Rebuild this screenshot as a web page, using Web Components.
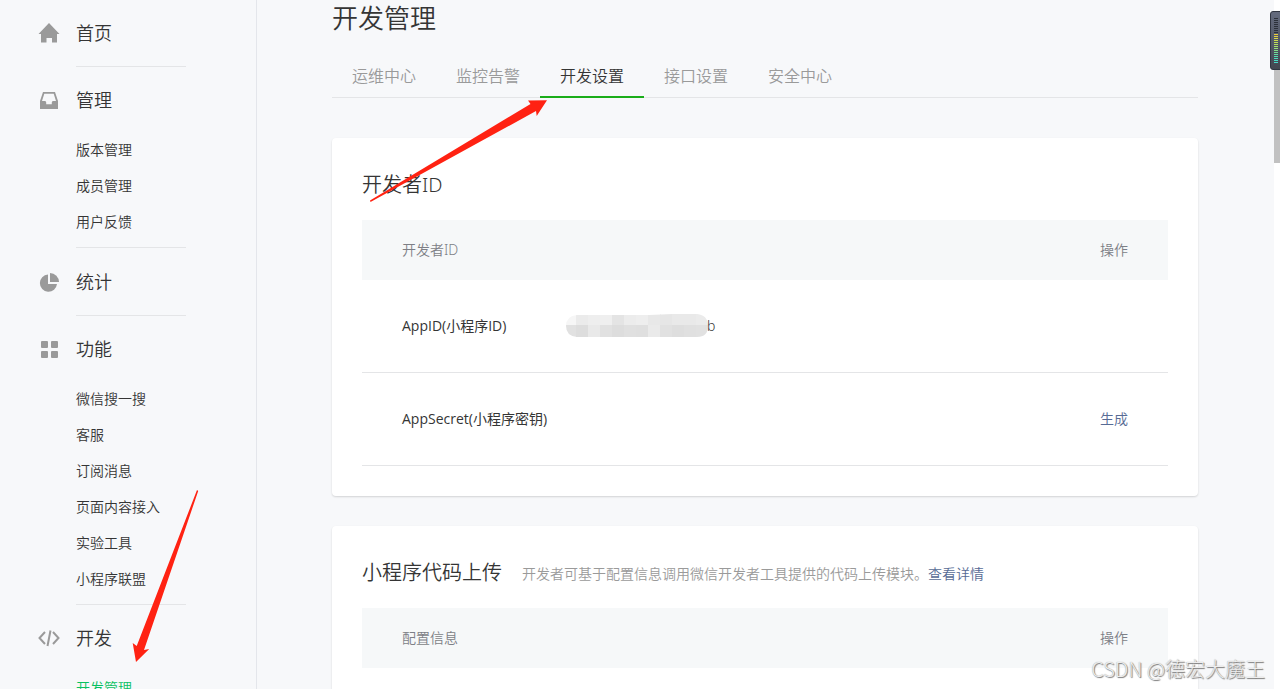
<!DOCTYPE html>
<html lang="zh-CN">
<head>
<meta charset="utf-8">
<title>开发管理</title>
<style>
html, body { margin: 0; height: 100%; overflow: hidden; }
body { background: #f7f8fa; color: #353535; font: 350 14px/20px "Noto Sans", "Noto Sans CJK SC", sans-serif; }
</style>
</head>
<body>
<app-shell>
  <side-nav slot="nav">
    <nav-group label="首页" icon="home"></nav-group>
    <nav-group label="管理" icon="tray">
      <nav-item>版本管理</nav-item><nav-item>成员管理</nav-item><nav-item>用户反馈</nav-item>
    </nav-group>
    <nav-group label="统计" icon="pie"></nav-group>
    <nav-group label="功能" icon="grid">
      <nav-item>微信搜一搜</nav-item><nav-item>客服</nav-item><nav-item>订阅消息</nav-item><nav-item>页面内容接入</nav-item><nav-item>实验工具</nav-item><nav-item>小程序联盟</nav-item>
    </nav-group>
    <nav-group label="开发" icon="code">
      <nav-item active>开发管理</nav-item>
    </nav-group>
  </side-nav>
  <page-heading>开发管理</page-heading>
  <tab-bar>
    <tab-link>运维中心</tab-link><tab-link>监控告警</tab-link><tab-link active>开发设置</tab-link><tab-link>接口设置</tab-link><tab-link>安全中心</tab-link>
  </tab-bar>
  <panel-card heading="开发者ID"><developer-table></developer-table></panel-card>
  <panel-card heading="小程序代码上传">
    <upload-hint slot="hint"></upload-hint>
    <upload-table></upload-table>
  </panel-card>
</app-shell>
<arrow-mark class="tabs"></arrow-mark>
<arrow-mark class="menu"></arrow-mark>
<level-meter></level-meter>
<page-watermark>CSDN @德宏大魔王</page-watermark>

<script>
const define = (name, html, setup) => {
  const template = document.createElement('template');
  template.innerHTML = html;
  customElements.define(name, class extends HTMLElement {
    constructor() {
      super();
      this.attachShadow({ mode: 'open' }).append(template.content.cloneNode(true));
    }
    connectedCallback() { if (setup) setup(this, this.shadowRoot); }
  });
};

define('app-shell', `
<style>
:host { display: grid; grid-template-columns: 257px minmax(0, 1fr) 6px; height: 100vh; overflow: hidden; }
aside { border-right: 1px solid #e4e6eb; overflow: hidden; }
main { padding: 0 76px 0 75px; overflow: hidden; }
.track { background: #fff; }
.thumb { height: 151px; margin-top: 12px; background: #c1c1c1; }
</style>
<aside><slot name="nav"></slot></aside>
<main><slot></slot></main>
<div class="track"><div class="thumb"></div></div>`);

define('side-nav', `
<style>:host { display: block; } nav { margin-top: -1px; }</style>
<nav aria-label="主菜单"><slot></slot></nav>`);

const icons = {
  home: '<path d="M11 1 21.5 12H19v8.5h-5V16H8.5v4.500H3V12H.5Z"/>',
  tray: '<path fill-rule="evenodd" d="M5 3h12l3 9v8H2v-8Zm1.300 1.800L4 12h3q1.200 0 1.200 1.500v1.700h5.600v-1.700Q13.800 12 15 12h3l-2.300-7.200Z"/>',
  pie: '<path d="M10 3.500V13h9a8.600 8.600 0 1 1-9-9.500Z"/><path d="M12 2a9 9 0 0 1 9 9h-9Z"/>',
  grid: '<rect x="3" y="3" width="7" height="7" rx="1"/><rect x="13" y="3" width="7" height="7" rx="1"/><rect x="3" y="13" width="7" height="7" rx="1"/><rect x="13" y="13" width="7" height="7" rx="1"/>',
  code: '<path fill="none" stroke="#9a9a9a" stroke-width="2" d="M7 5 1.500 11 7 17M15 5l5.500 6L15 17M12.500 3.500l-3 15.500"/>'
};
define('nav-group', `
<style>
:host { display: block; }
a { display: grid; grid-template-columns: 22px 1fr; column-gap: 16px; align-items: center; height: 64px; padding: 2px 0 0 38px; color: #353535; font-size: 18px; line-height: 26px; text-decoration: none; }
svg { width: 22px; height: 22px; fill: #9a9a9a; }
.items { width: 110px; margin-left: 76px; padding-bottom: 1px; border-bottom: 1px solid #e4e5e7; }
.filled a { padding-top: 1px; }
.filled .items { padding-bottom: 7px; }
</style>
<section>
<a href="#"><svg viewBox="0 0 22 22" aria-hidden="true"></svg><span></span></a>
<div class="items"><slot></slot></div>
</section>`, (el, root) => {
  root.querySelector('span').textContent = el.getAttribute('label');
  root.querySelector('svg').innerHTML = icons[el.getAttribute('icon')];
  root.querySelector('section').classList.toggle('filled', el.children.length > 0);
});

define('nav-item', `
<style>
:host { display: block; }
a { display: block; line-height: 36px; color: #353535; text-decoration: none; white-space: nowrap; }
:host([active]) a { color: #07c160; }
</style>
<a href="#"><slot></slot></a>`);

define('page-heading', `
<style>:host { display: block; } h1 { margin: 0 0 20px; font-size: 26px; line-height: 36px; font-weight: inherit; }</style>
<h1><slot></slot></h1>`);

define('tab-bar', `
<style>:host { display: block; } nav { display: flex; height: 41px; border-bottom: 1px solid #e4e5e7; margin-bottom: 40px; }</style>
<nav aria-label="页签"><slot></slot></nav>`);

define('tab-link', `
<style>
:host { display: block; }
a { display: block; height: 40px; padding: 0 20px; font-size: 16px; line-height: 40px; color: #9a9a9a; text-decoration: none; }
:host([active]) a { color: #353535; border-bottom: 2px solid #1aad19; }
</style>
<a href="#"><slot></slot></a>`);

define('panel-card', `
<style>
:host { display: block; margin-bottom: 30px; padding: 30px; background: #fff; border-radius: 4px; box-shadow: 0 1px 2px rgba(0,0,0,.15); }
header { display: flex; align-items: center; gap: 20px; margin-bottom: 18px; }
h2 { margin: 0; font-size: 20px; line-height: 34px; font-weight: inherit; white-space: nowrap; }
</style>
<header><h2></h2><slot name="hint"></slot></header>
<slot></slot>`, (el, root) => { root.querySelector('h2').textContent = el.getAttribute('heading'); });

define('upload-hint', `
<style>:host { display: block; padding-top: 2px; color: #9a9a9a; } a { color: #576b95; text-decoration: none; }</style>
开发者可基于配置信息调用微信开发者工具提供的代码上传模块。<a href="#">查看详情</a>`);

const tableStyle = `
<style>
:host { display: block; }
table { width: 100%; border-collapse: separate; border-spacing: 0; table-layout: fixed; }
th, td { padding: 0; text-align: left; font-weight: inherit; }
th:first-child { padding-left: 40px; }
th:last-child, td:last-child { padding-right: 40px; text-align: right; }
thead th { height: 60px; background: #f6f8f9; color: #7d7f86; }
tbody th, tbody td { height: 92px; border-bottom: 1px solid #e4e5e7; }
tbody th { font-weight: 400; font-family: "Open Sans", "Noto Sans CJK SC", sans-serif; }
.name { width: 203px; }
.op { width: 100px; }
a { color: #576b95; text-decoration: none; }
.id { display: flex; align-items: center; }
svg { width: 144px; height: 24px; margin-right: -2px; }
</style>`;

define('developer-table', tableStyle + `
<table>
<colgroup><col class="name"><col><col class="op"></colgroup>
<thead><tr><th scope="col">开发者ID</th><th></th><th scope="col">操作</th></tr></thead>
<tbody>
<tr><th scope="row">AppID(小程序ID)</th><td><div class="id"><svg viewBox="0 0 144 24" role="img" aria-label="已遮盖"><defs><clipPath id="blob"><path d="M12 1H84L108 0H132Q143 1 143 12T132 23H12Q1 22 1 12T12 1Z"/></clipPath></defs><g clip-path="url(#blob)" id="cells"></g></svg><span>b</span></div></td><td></td></tr>
<tr><th scope="row">AppSecret(小程序密钥)</th><td></td><td><a href="#">生成</a></td></tr>
</tbody>
</table>`, (el, root) => {
  const shades = [
    ['#f6f6f6', '#ebebeb', '#eeeeee', '#efefef', '#e4e4e4', '#ececec', '#eeeeee', '#e8e8e8', '#e6e6e6', '#e9e9e9', '#e9e9e9', '#ebebeb'],
    ['#e1e1e1', '#dddddd', '#e9e9e9', '#e1e1e1', '#dddddd', '#e0e0e0', '#dfdfdf', '#eaeaea', '#e1e1e1', '#dedede', '#e0e0e0', '#e1e1e1']
  ];
  root.querySelector('#cells').innerHTML = shades.map((row, y) => row.map((c, x) =>
    `<rect x="${x * 12 - 1}" y="${y * 12 - 1}" width="13" height="12" fill="${c}"/>`).join('')).join('');
});

define('upload-table', tableStyle + `
<table>
<colgroup><col><col class="op"></colgroup>
<thead><tr><th scope="col">配置信息</th><th scope="col">操作</th></tr></thead>
<tbody><tr><th></th><td></td></tr></tbody>
</table>`);

define('arrow-mark', `
<style>
:host { position: absolute; pointer-events: none; }
:host(.tabs) { left: 368px; top: 98px; width: 180px; height: 106px; }
:host(.menu) { left: 130px; top: 488px; width: 70px; height: 176px; }
svg { display: none; width: 100%; height: 100%; fill: #ff2212; }
:host(.tabs) .a, :host(.menu) .b { display: block; }
</style>
<svg class="a" viewBox="0 0 180 106" aria-hidden="true"><path d="M2 102.500 162.500 6 160 2.500 179 2.300 168.700 18 168 13 2.500 104Z"/></svg>
<svg class="b" viewBox="0 0 70 176" aria-hidden="true"><path d="M67 2 68.200 3 14 162 19.200 161 6 174 2.700 155 6.700 158Z"/></svg>`);

define('level-meter', `
<style>
:host { position: absolute; right: 0; top: 11px; width: 10px; height: 59px; }
svg { display: block; width: 100%; height: 100%; }
</style>
<svg viewBox="0 0 10 59" aria-hidden="true"><defs><linearGradient id="g" x2="0" y2="1"><stop stop-color="#646b7e"/><stop offset="1" stop-color="#424650"/></linearGradient></defs><path d="M10 .5H3Q.5 .5 .5 3v53q0 2.500 2.500 2.500h7" fill="url(#g)" stroke="#303541"/><g></g></svg>`, (el, root) => {
  const colors = Array(8).fill('#2c313a').concat('#e9cb3c', '#e6d43f', '#d9db43', '#cddd4c', '#c0df56', '#b4e05f', '#a5e16b', '#95e079', '#83e087', '#72df94', '#62dea1', '#53deae', '#4cdcb9', '#49dac2', '#48d9c9');
  root.querySelector('g').innerHTML = colors.map((c, i) => `<rect x="4" y="${7 + i * 2}" width="4" height="1" fill="${c}"/>`).join('');
});

define('page-watermark', `
<style>
:host { position: absolute; right: 15px; bottom: 6px; font: 300 20px/28px "Noto Sans CJK SC", sans-serif; color: #eee; text-shadow: 1px 1px 1px #777, 0 0 1px #999; white-space: nowrap; }
</style><slot></slot>`);
</script>
</body>
</html>
